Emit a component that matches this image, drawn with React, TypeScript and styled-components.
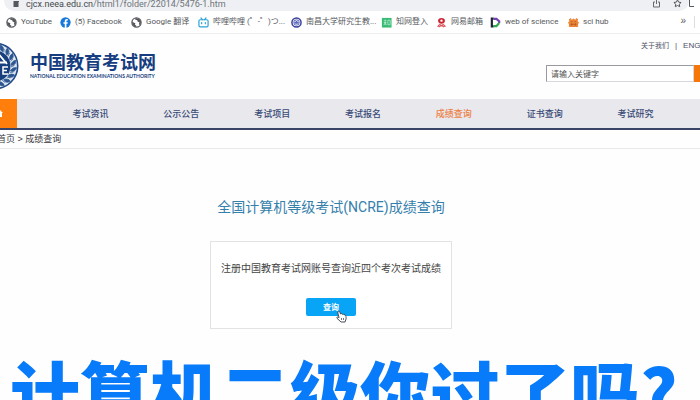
import React from "react";
import styled, { createGlobalStyle } from "styled-components";

const Global = createGlobalStyle`
  * { box-sizing: border-box; }
  body { margin: 0; background: #fff; font-family: "Liberation Sans", "Noto Sans CJK SC", sans-serif; }
`;

const Page = styled.div`
  position: relative;
  height: 100vh;
  overflow: hidden;
  background: #fefefe;
`;

const AddressBar = styled.div`
  display: flex;
  align-items: flex-end;
  justify-content: space-between;
  height: 11px;
  padding: 0 6px 0 12px;
  margin-left: 4px;
  background: #fff;
`;

const AddressPill = styled.div`
  display: flex;
  align-items: flex-end;
  flex: 1;
  height: 11px;
  margin-left: -12px;
  padding: 0 7px 0 8px;
  border-radius: 0 0 10px 10px;
  background: #eef0f3;
`;

const Url = styled.span`
  flex: 1;
  margin-left: 5px;
  color: #70747a;
  font: 9px/14px Roboto, sans-serif;
  white-space: nowrap;
  b { color: #45484d; font-weight: 400; }
`;

const Tools = styled.div`
  display: flex;
  gap: 12px;
  margin-bottom: 3px;
`;

const Bookmarks = styled.nav`
  display: flex;
  align-items: center;
  height: 23px;
  padding: 0 5px 0 6px;
  border-bottom: 1px solid #eceef0;
  background: #fff;
`;

const Bookmark = styled.a<{ $width: number }>`
  display: flex;
  align-items: center;
  gap: 4px;
  flex: 0 0 ${(p) => p.$width}px;
  color: #55585c;
  font: 8px/12px Roboto, "Noto Sans CJK SC", sans-serif;
  text-decoration: none;
  white-space: nowrap;
  svg { flex: none; }
`;

const More = styled.button`
  margin-left: auto;
  padding: 0 8px 2px 0;
  border: 0;
  border-right: 1px solid #dcdee0;
  background: none;
  color: #55585c;
  font: 10px/10px "Liberation Sans", sans-serif;
`;

const Header = styled.header`
  display: flex;
  justify-content: space-between;
  height: 65px;
`;

const Brand = styled.div`
  display: flex;
  align-items: center;
  padding-bottom: 1px;
  gap: 11px;
  svg { margin-left: -29px; }
`;

const BrandName = styled.h1`
  margin: 0;
  color: #163d80;
  font: 700 18px/18px "Noto Sans CJK SC", sans-serif;
`;

const BrandSub = styled.p`
  margin: 3px 0 2px;
  color: #163d80;
  font: 700 5px/6px Lato, sans-serif;
  white-space: nowrap;
`;

const HeaderSide = styled.div`
  flex: 0 0 154px;
  min-width: 0;
  padding-top: 6px;
`;

const TopLinks = styled.div`
  display: flex;
  gap: 6px;
  padding-left: 95px;
  color: #4d5065;
  font-size: 8px;
  line-height: 12px;
  white-space: nowrap;
  a { color: inherit; text-decoration: none; }
  a:first-child { font-size: 7px; }
`;

const Search = styled.form`
  display: flex;
  height: 17px;
  margin-top: 13px;
`;

const SearchInput = styled.input`
  flex: 1;
  min-width: 0;
  padding: 0 4px;
  border: 1px solid #d8d8dc;
  border-top-color: #99999f;
  border-left-color: #99999f;
  border-radius: 0;
  background: #fff;
  font: 8px/14px "Noto Sans CJK SC", sans-serif;
  &::placeholder { color: #505050; opacity: 1; }
`;

const SearchButton = styled.button`
  flex: 0 0 6px;
  padding: 0;
  border: 0;
  background: #f57709;
`;

const MainNav = styled.nav`
  display: flex;
  height: 31px;
  border-bottom: 2px solid #394466;
  background: #e8e8ed;
`;

const Home = styled.a`
  display: flex;
  align-items: center;
  flex: 0 0 17px;
  background: #ff7e0c;
`;

const NavItems = styled.div`
  display: grid;
  flex: 1;
  grid-template-columns: repeat(7, 1fr);
  padding: 0 19px 0 28px;
`;

const NavItem = styled.a<{ $active?: boolean }>`
  display: flex;
  align-items: center;
  justify-content: center;
  color: ${(p) => (p.$active ? "#ed8147" : "#384a75")};
  font: 500 9px/12px "Noto Sans CJK SC", sans-serif;
  text-decoration: none;
`;

const Crumbs = styled.nav`
  height: 19px;
  margin-left: -3px;
  border-bottom: 1px solid #e9e9eb;
  color: #3a3a3e;
  font-size: 9px;
  line-height: 18px;
  a { color: inherit; text-decoration: none; }
`;

const Main = styled.main`
  display: flex;
  flex-direction: column;
  align-items: center;
  padding: 48px 38px 0 0;
`;

const Title = styled.h2`
  margin: 0;
  color: #357fac;
  font: 400 14px/20px Roboto, "Noto Sans CJK SC", sans-serif;
`;

const Card = styled.section`
  display: flex;
  flex-direction: column;
  align-items: center;
  gap: 21px;
  margin-top: 24px;
  padding: 19px 10px 12px;
  border: 1px solid #e3e3e5;
  background: #fff;
`;

const Note = styled.p`
  margin: 0;
  color: #444;
  font-size: 10px;
  line-height: 16px;
`;

const QueryButton = styled.button`
  position: relative;
  width: 50px;
  height: 18px;
  padding: 0;
  border: 0;
  border-radius: 2px;
  background: #08a4f5;
  color: #fff;
  font: 700 8px/18px "Noto Sans CJK SC", sans-serif;
  svg { position: absolute; right: 8px; bottom: -7px; }
`;

const Caption = styled.p`
  position: absolute;
  top: 352px;
  left: 10px;
  margin: 0;
  color: #087bfa;
  font: 900 70px/78px "Noto Sans CJK SC", sans-serif;
  white-space: nowrap;
`;

const Globe = () => (
  <svg width="11" height="11" viewBox="0 0 12 12">
    <circle cx="6" cy="6" r="5" fill="#fff" stroke="#55585c" strokeWidth="1.4" />
    <path d="M1 5.2 4.8 6.7 4.2 8.2 5.8 9.5 5.2 11 2 9ZM5 1l-.4 2 2.2.5.6 1.6 1.8.5L8.6 8l1.2.8L11 6 9.6 2.4Z" fill="#55585c" />
  </svg>
);
const Facebook = () => (
  <svg width="11" height="11" viewBox="0 0 12 12">
    <circle cx="6" cy="6" r="5.6" fill="#1778dc" />
    <path d="M5.2 12V7.4H3.8V5.7h1.4V4.5c0-1.5.9-2.3 2.2-2.3l1.1.1v1.5h-.7c-.7 0-.8.4-.8.9v1h1.5l-.3 1.7H7V12Z" fill="#fff" />
  </svg>
);
const Bili = () => (
  <svg width="11" height="11" viewBox="0 0 12 12" fill="none" stroke="#29a3d5" strokeWidth="1.3" strokeLinecap="round">
    <rect x="1" y="3" width="10" height="7.8" rx="1.4" />
    <path d="M3.2 1 4.8 2.8M8.8 1 7.2 2.8M4 6v1.3M8 6v1.3" />
  </svg>
);
const University = () => (
  <svg width="11" height="11" viewBox="0 0 12 12">
    <circle cx="6" cy="6" r="5" fill="#eef0fb" stroke="#38409b" strokeWidth="1.6" />
    <circle cx="6" cy="6" r="3.3" fill="#5b64b6" />
    <path d="M3.5 5.5 6 3.8l2.5 1.7M4 7.2c1.2 1 2.8 1 4 0" fill="none" stroke="#fff" />
  </svg>
);
const Cnki = () => (
  <svg width="11" height="11" viewBox="0 0 12 12">
    <rect x="1" y="1" width="10.5" height="10.5" fill="#37ba73" />
    <path d="M3 3.5h3M4.5 3.5v5M3 6h3M3 8.8l1.5-2L6 8.8M7.5 3.5H10v5H7.5Z" fill="none" stroke="#c1f0d4" strokeWidth=".8" />
  </svg>
);
const Netease = () => (
  <svg width="11" height="11" viewBox="0 0 12 12">
    <path d="M6 1C3.6 1 2.3 2.2 2.3 4s1.3 3 3.7 3 3.7-1.2 3.7-3S8.4 1 6 1Z" fill="#c92431" />
    <path d="M2 11c0-2 1.3-2.8 4-4 2.7 1.2 4 2 4 4M3 7.5l6 3.5M9 7.5 3 11" fill="none" stroke="#dc5861" strokeWidth="1.2" />
    <circle cx="6" cy="4" r="1.3" fill="#fff" />
  </svg>
);
const Science = () => (
  <svg width="11" height="11" viewBox="0 0 12 12" fill="none" strokeWidth="2.4">
    <path d="M4 1.8H2v8.4h2" stroke="#202536" />
    <path d="M4 2h3l3 2.6v2" stroke="#7442b5" />
    <path d="M10 6.5 7 10H4" stroke="#32a94b" />
  </svg>
);
const SciHub = () => (
  <svg width="11" height="11" viewBox="0 0 12 12">
    <path d="M1 2.5 3 1l1 2 2-1.5L8 3l1-2 2 1.5-.5 2L12 6l-1 2v3H1V8L0 6l1.5-1.5Z" fill="#ed8736" />
    <path d="M3 5h2M7 5h2M2.5 8h7M4 6.5v3M8 6.5v3" stroke="#ae5324" strokeWidth=".8" />
  </svg>
);

const leafAngles = [-70, -50, -30, -10, 10, 30, 50, 70, 110, 130, 150, 170, 190, 210, 230, 250];

const Emblem = () => (
  <svg width="48" height="48" viewBox="0 0 48 48">
    <circle cx="24" cy="24" r="22.7" fill="#dfe8f2" stroke="#214b88" strokeWidth="1.6" />
    {leafAngles.map((a) => (
      <path key={a} transform={`rotate(${a} 24 24)`} d="M40 26c1-3 3-4 5.5-4-.5 3-2 5-5.5 4ZM40 22l3-2" fill="#2d5690" stroke="#2d5690" strokeWidth=".8" />
    ))}
    <circle cx="24" cy="24" r="15.5" fill="#173f7d" />
    <path d="M24 9 12 21M25 9l11 13M15 20.5h21" fill="none" stroke="#fff" strokeWidth="1.8" />
    <path d="M37 25h-5v7h5M32 28.5h4M14 32v-7l6 7v-7M28 25h-5v7h5M23 28.5h4" fill="none" stroke="#fff" strokeWidth="1.5" />
  </svg>
);

const bookmarks: { label: string; width: number; Icon: React.FC }[] = [
  { label: "YouTube", width: 54, Icon: Globe },
  { label: "(5) Facebook", width: 71, Icon: Facebook },
  { label: "Google 翻译", width: 67, Icon: Globe },
  { label: "哔哩哔哩 (゜-゜)つ...", width: 93, Icon: Bili },
  { label: "南昌大学研究生教...", width: 90, Icon: University },
  { label: "知网登入", width: 55, Icon: Cnki },
  { label: "网易邮箱", width: 54, Icon: Netease },
  { label: "web of science", width: 78, Icon: Science },
  { label: "sci hub", width: 50, Icon: SciHub },
];

const sections = ["考试资讯", "公示公告", "考试项目", "考试报名", "成绩查询", "证书查询", "考试研究"];

export default function App() {
  return (
    <Page>
      <Global />
      <AddressBar>
        <AddressPill>
          <svg width="9" height="10" viewBox="0 0 9 10">
            <path d="M2.5 1V-2h4v3" fill="none" stroke="#55585c" />
            <rect x="1.5" y="0" width="5" height="6" fill="#55585c" />
          </svg>
          <Url><b>cjcx.neea.edu.cn</b>/html1/folder/22014/5476-1.htm</Url>
          <Tools>
            <svg width="9" height="9" viewBox="0 0 9 9" fill="none" stroke="#66696d">
              <path d="M3 3H1.5v5h6V3H6M4.5 5V0" />
            </svg>
            <svg width="9" height="9" viewBox="0 0 9 9" fill="none" stroke="#55585c">
              <path d="m4.5.8 1.1 2.3 2.5.4-1.8 1.7.4 2.5-2.2-1.2-2.2 1.2.4-2.5L.9 3.5l2.5-.4Z" />
            </svg>
          </Tools>
        </AddressPill>
        <svg width="5" height="11" viewBox="0 0 5 11" fill="none" stroke="#55585c">
          <path d="M6 6.5H.5V-1" />
        </svg>
      </AddressBar>
      <Bookmarks aria-label="Bookmarks">
        {bookmarks.map(({ label, width, Icon }) => (
          <Bookmark key={label} href="#" $width={width}><Icon />{label}</Bookmark>
        ))}
        <More>»</More>
      </Bookmarks>
      <Header>
        <Brand>
          <Emblem />
          <div>
            <BrandName>中国教育考试网</BrandName>
            <BrandSub>NATIONAL EDUCATION EXAMINATIONS AUTHORITY</BrandSub>
          </div>
        </Brand>
        <HeaderSide>
          <TopLinks><a href="#">关于我们</a><span>|</span><a href="#">ENGLISH</a></TopLinks>
          <Search onSubmit={(e) => e.preventDefault()}>
            <SearchInput aria-label="请输入关键字" placeholder="请输入关键字" />
            <SearchButton aria-label="搜索" />
          </Search>
        </HeaderSide>
      </Header>
      <MainNav>
        <Home href="#" aria-label="首页">
          <svg width="5" height="9" viewBox="0 0 5 9"><path d="M-4 5V3l3-3 4 4H2v4H-4Z" fill="#fff" /></svg>
        </Home>
        <NavItems>
          {sections.map((s) => <NavItem key={s} href="#" $active={s === "成绩查询"}>{s}</NavItem>)}
        </NavItems>
      </MainNav>
      <Crumbs><a href="#">首页</a> &gt; <a href="#">成绩查询</a></Crumbs>
      <Main>
        <Title>全国计算机等级考试(NCRE)成绩查询</Title>
        <Card>
          <Note>注册中国教育考试网账号查询近四个考次考试成绩</Note>
          <QueryButton>
            查询
            <svg width="13" height="13" viewBox="0 0 13 13">
              <path d="M3 1.5c.8-.7 1.5-.2 1.8.6L5.600 4l1-.4.7.7 1-.2.7.7 1-.1c.9.800 1.300 2.600 1.100 4.100L10 12H6L2 8.300c-.6-1 .3-1.700 1.200-1.100l.9.500L2.800 3Z" fill="#fff" stroke="#333c46" strokeWidth=".9" />
              <path d="M6.5 8v2M8.5 8v2" stroke="#333c46" strokeWidth=".7" />
            </svg>
          </QueryButton>
        </Card>
      </Main>
      <Caption>计算机二级你过了吗?</Caption>
    </Page>
  );
}
